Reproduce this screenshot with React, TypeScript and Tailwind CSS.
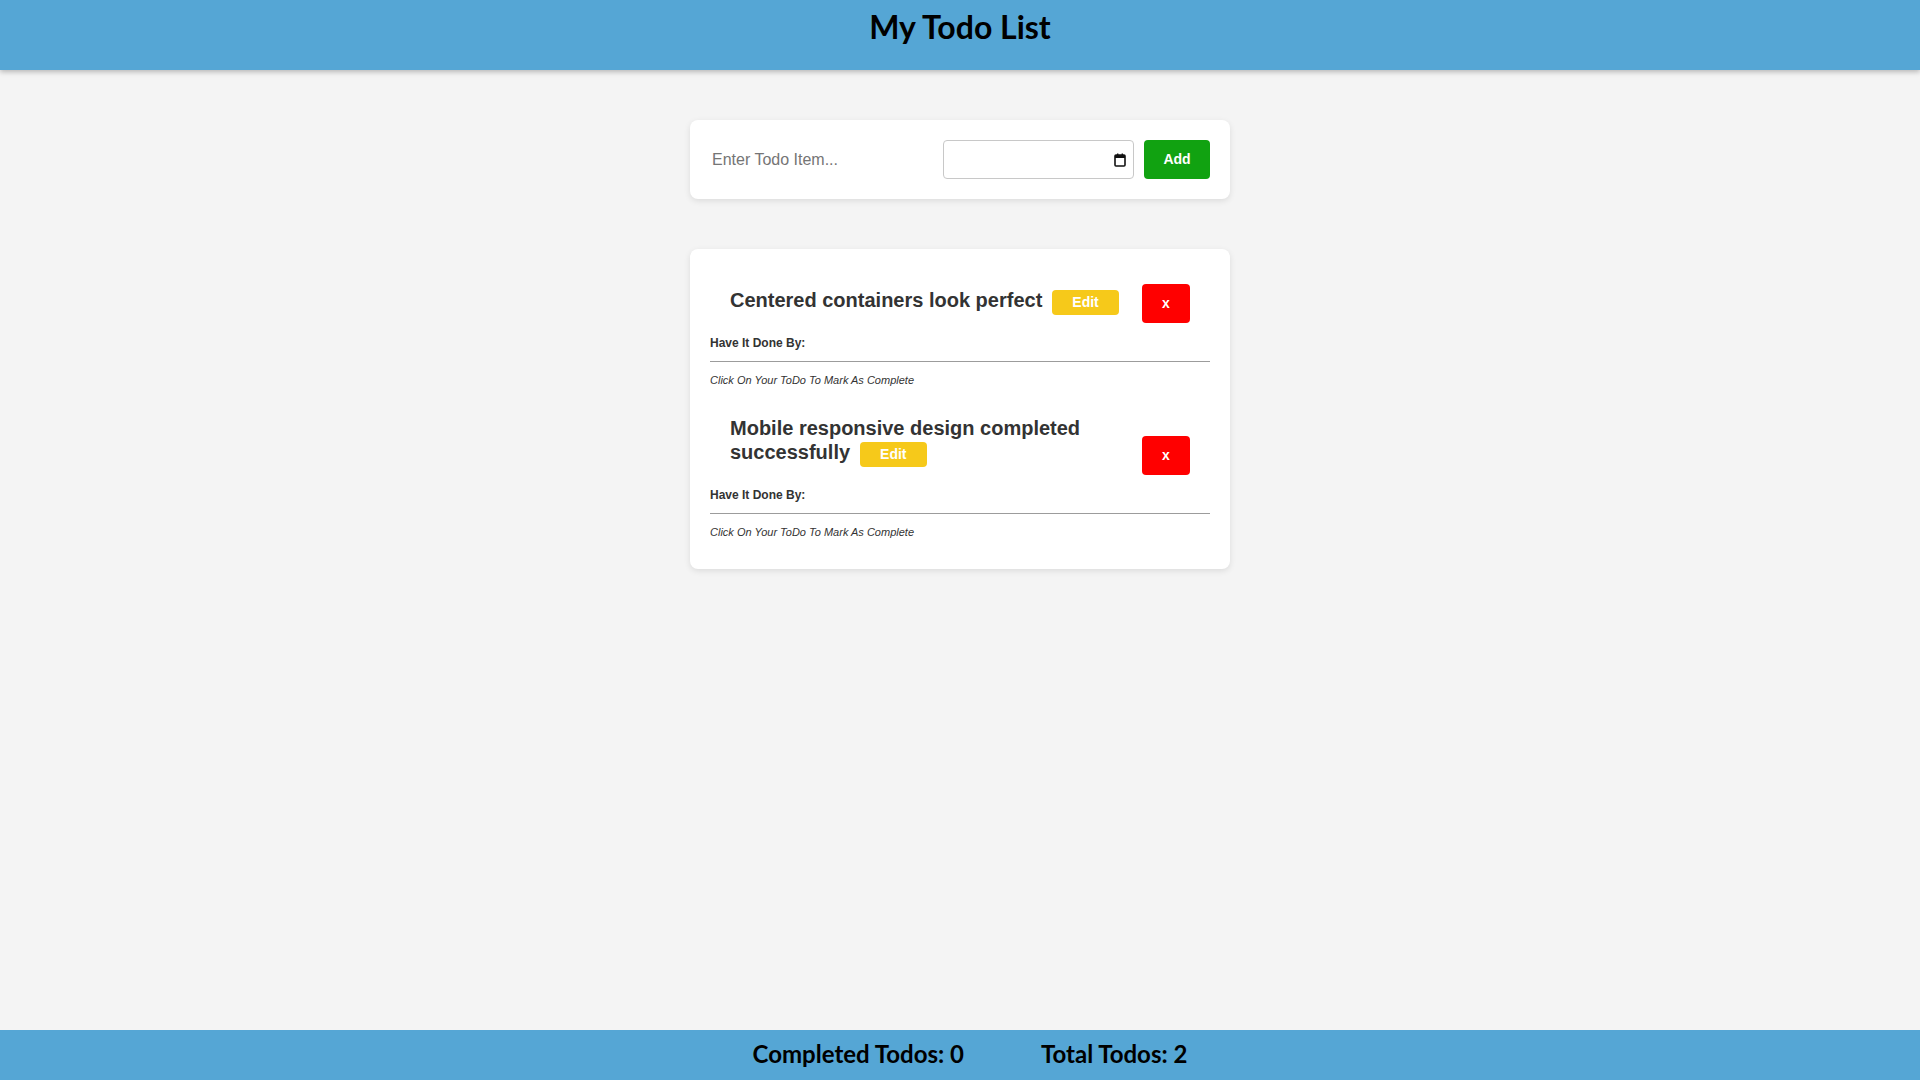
import { useState } from 'react';

interface Todo {
  id: number;
  text: string;
  dueDate: string;
  completed: boolean;
}

const initialTodos: Todo[] = [
  { id: 1, text: 'Centered containers look perfect', dueDate: '', completed: false },
  { id: 2, text: 'Mobile responsive design completed successfully', dueDate: '', completed: false },
];

function CalendarIcon() {
  return (
    <svg width="12" height="14" viewBox="0 0 12 14" className="shrink-0">
      <rect x="1" y="2" width="10" height="11" rx="1" fill="none" stroke="#111" strokeWidth="1.6" />
      <rect x="1" y="2" width="10" height="3" fill="#111" />
      <rect x="3" y="0.5" width="1.4" height="2.5" fill="#111" />
      <rect x="7.6" y="0.5" width="1.4" height="2.5" fill="#111" />
    </svg>
  );
}

function TodoItem({ todo, onDelete }: { todo: Todo; onDelete: (id: number) => void }) {
  return (
    <li className="pt-[15px] pb-[14px]">
      <div className="flex items-end px-5">
        <h3 className="flex-1 pb-[8px] text-[20px] leading-[24px] font-bold text-[#333]">
          {todo.text}
          <button className="ml-[10px] inline-block rounded-[4px] bg-[#f6c91a] px-5 py-[4px] text-[14px] leading-[17px] font-bold text-white">
            Edit
          </button>
        </h3>
        <button
          onClick={() => onDelete(todo.id)}
          className="ml-4 flex h-[39px] w-[48px] shrink-0 items-center justify-center rounded-[4px] bg-[#ff0000] text-[14px] font-bold text-white"
        >
          x
        </button>
      </div>
      <p className="mt-[13px] text-[12px] leading-[15px] font-bold text-[#333]">Have It Done By: {todo.dueDate}</p>
      <hr className="mt-[10px] border-t border-[#9c9c9c]" />
      <p className="mt-[12px] text-[11px] leading-[13px] italic text-[#333]">Click On Your ToDo To Mark As Complete</p>
    </li>
  );
}

export default function App() {
  const [todos, setTodos] = useState<Todo[]>(initialTodos);
  const [text, setText] = useState('');

  const addTodo = (e: React.FormEvent) => {
    e.preventDefault();
    if (!text.trim()) return;
    setTodos([...todos, { id: Date.now(), text, dueDate: '', completed: false }]);
    setText('');
  };

  const completed = todos.filter(t => t.completed).length;

  return (
    <div className="flex min-h-screen flex-col bg-[#f4f4f4] font-['Liberation_Sans',Arial,sans-serif]">
      {/* Header */}
      <header className="relative z-10 flex h-[70px] shrink-0 justify-center bg-[#55a6d5] pt-[8px] shadow-[0_2px_5px_rgba(0,0,0,0.25)]">
        <h1 className="font-['Lato',sans-serif] text-[32px] leading-[38px] font-bold text-black">My Todo List</h1>
      </header>

      <main className="flex flex-1 flex-col items-center">
        {/* Add form */}
        <form
          onSubmit={addTodo}
          className="mt-[50px] flex w-[540px] items-center rounded-lg bg-white p-5 shadow-[0_2px_6px_rgba(0,0,0,0.1)]"
        >
          <input
            value={text}
            onChange={e => setText(e.target.value)}
            placeholder="Enter Todo Item..."
            className="h-[39px] min-w-0 flex-1 pl-[2px] text-[16px] text-[#333] outline-none placeholder:text-[#757575]"
          />
          <div className="ml-2 flex h-[39px] w-[191px] items-center justify-end rounded-[4px] border border-[#c8c8c8] pr-[7px]">
            <CalendarIcon />
          </div>
          <button type="submit" className="ml-[10px] h-[39px] w-[66px] rounded-[4px] bg-[#11a211] text-[14px] font-bold text-white">
            Add
          </button>
        </form>

        {/* Todo list */}
        <ul className="mt-[50px] w-[540px] rounded-lg bg-white px-5 pt-5 pb-4 shadow-[0_2px_6px_rgba(0,0,0,0.1)]">
          {todos.map(todo => (
            <TodoItem key={todo.id} todo={todo} onDelete={id => setTodos(todos.filter(t => t.id !== id))} />
          ))}
        </ul>
      </main>

      {/* Footer */}
      <footer className="flex h-[50px] shrink-0 items-center justify-center gap-[77px] bg-[#55a6d5] pb-[2px] pl-5 font-['Lato',sans-serif] text-[24px] font-bold text-black">
        <span>Completed Todos: {completed}</span>
        <span>Total Todos: {todos.length}</span>
      </footer>
    </div>
  );
}
